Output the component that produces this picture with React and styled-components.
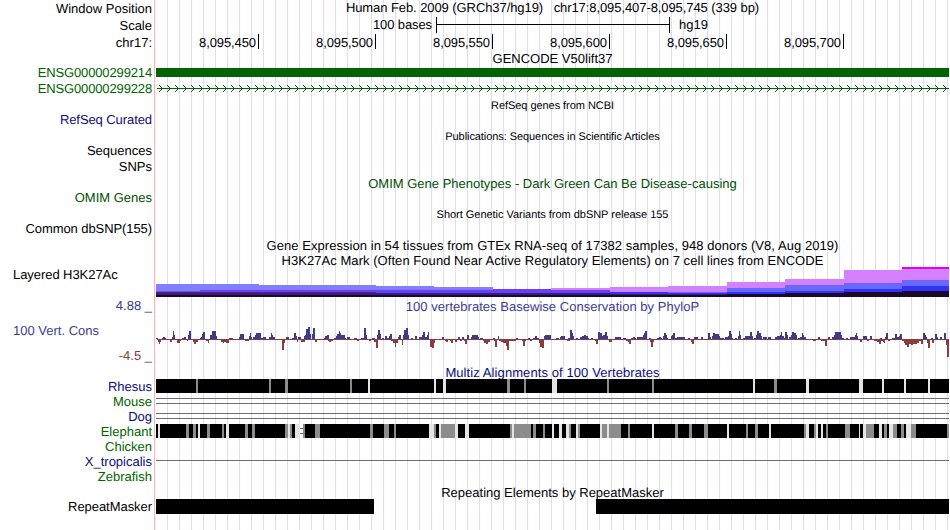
import React from 'react';
import styled, { createGlobalStyle } from 'styled-components';

const BLUE = '#0c0c78';
const GREEN = '#006400';
const OMIM = '#005000';
const CONS_UP = '#3c3c8c';
const CONS_DOWN = '#8c3c3c';

const GlobalStyle = createGlobalStyle`
  body {
    margin: 0;
    background: white;
  }
`;

const Browser = styled.div`
  display: flex;
  flex-direction: column;
  width: 950px;
  height: 530px;
  overflow: hidden;
  font-family: "Liberation Sans", Arial, sans-serif;
  font-size: 13px;
  line-height: 15px;
  text-rendering: geometricPrecision;
  color: black;
  background:
    linear-gradient(#ffb4b4, #ffb4b4) 154px 0 / 1px 100% no-repeat,
    repeating-linear-gradient(90deg, #dcdcff 0 1px, transparent 1px 12px) 167px 0 / 782px 100% no-repeat;
`;

const Row = styled.div`
  display: grid;
  grid-template-columns: 156px 793px;
  height: ${props => props.$h}px;
`;

const Label = styled.div`
  padding: ${props => props.$top || 0}px 4px 0 13px;
  text-align: ${props => props.$left ? 'left' : 'right'};
  letter-spacing: ${props => props.$ls || 0}px;
  white-space: pre;
  color: ${props => props.$color || 'black'};
`;

const Title = styled.div`
  padding-top: ${props => props.$top || 0}px;
  text-align: center;
  letter-spacing: ${props => props.$ls || 0}px;
  white-space: pre;
  color: ${props => props.$color || 'black'};
`;

const SmallTitle = styled(Title)`
  padding-top: 3px;
  font-size: 11px;
  line-height: 12px;
`;

const Scale = styled.div`
  display: flex;
`;

const ScaleText = styled.span`
  width: 276px;
  margin-right: 4px;
  text-align: right;
  letter-spacing: -0.1px;
`;

const ScaleBar = styled.span`
  box-sizing: border-box;
  width: 234px;
  height: 16px;
  margin-right: 9px;
  border: solid black;
  border-width: 0 1px;
  background: linear-gradient(black, black) 0 7px / 100% 1px no-repeat;
`;

const Ruler = styled.div`
  display: flex;
  padding-top: 1px;
`;

const Mark = styled.span`
  box-sizing: border-box;
  width: ${props => props.$first ? 103 : 117}px;
  height: 15px;
  padding: 1px 2px 0 0;
  border-right: 1px solid black;
  text-align: right;
  letter-spacing: -0.1px;
`;

const GeneBar = styled.div`
  height: 9px;
  margin-top: 3px;
  background: ${GREEN};
`;

const Repeats = styled.div`
  display: flex;
  justify-content: space-between;
`;

const Repeat = styled.span`
  width: ${props => props.$w}px;
  background: black;
`;

const Drawing = styled.svg`
  display: block;
  overflow: visible;
  shape-rendering: crispEdges;
`;

// H3K27Ac steps: [x, width, [top, color], ...], every layer runs down to y = 30
const PINK = '#d480ff';
const SKY = '#6868ff';
const COBALT = '#3232ff';
const VIOLET = '#6c3cff';
const LILAC = '#8080ff';
const MAROON = '#5a2070';
const NAVY = '#302080';
const DARK = '#1c0828';
const SIGNAL = [
  [0, 44, [17, LILAC], [24, '#6c50f0'], [25, MAROON], [26, NAVY], [28, DARK]],
  [44, 59, [17, LILAC], [23, VIOLET], [25, MAROON], [26, NAVY], [28, DARK]],
  [103, 117, [18, LILAC], [23, VIOLET], [25, '#60208c'], [26, NAVY], [28, DARK]],
  [220, 58, [19, LILAC], [23, VIOLET], [26, NAVY], [28, DARK]],
  [278, 59, [20, LILAC], [23, VIOLET], [26, NAVY], [28, DARK]],
  [337, 58, [22, VIOLET], [26, NAVY], [28, DARK]],
  [395, 59, [21, PINK], [23, VIOLET], [26, NAVY], [28, DARK]],
  [454, 58, [20, PINK], [25, COBALT], [27, NAVY], [28, DARK]],
  [512, 59, [19, PINK], [25, SKY], [26, COBALT], [27, NAVY], [28, DARK]],
  [571, 58, [15, PINK], [21, SKY], [25, COBALT], [27, DARK]],
  [629, 59, [12, PINK], [18, SKY], [24, COBALT], [26, DARK]],
  [688, 58, [3, PINK], [16, SKY], [22, COBALT], [25, DARK]],
  [746, 47, [0, '#dc00ff'], [2, PINK], [13, SKY], [19, COBALT], [24, DARK]],
];

// PhyloP scores by block: x origin of the block and flat triples of
// start, end (thirds of a pixel) and height in pixels, negative below the axis
const PHYLOP = [
  [-6, [
    18, 24, 1, 36, 48, 1, 40, 46, 2, 66, 75, 2, 69, 72, 8, 72, 75, 4, 97, 108, 1, 102, 108, 2,
    114, 117, 4, 117, 123, 8, 150, 153, 1, 153, 156, 2, 156, 159, 5, 159, 165, 7,
    180, 186, 4, 186, 198, 8, 198, 201, 3, 237, 249, 1, 267, 270, 2, 270, 282, 5,
    297, 300, 3, 300, 303, 6, 303, 306, 2, 309, 315, 2, 315, 318, 4, 318, 333, 6, 333, 339, 1,
    339, 348, 2, 357, 363, 2, 363, 366, 6, 366, 369, 4, 369, 375, 2, 408, 417, 2, 426, 432, 1,
    432, 438, 6, 438, 441, 3, 444, 453, 2, 462, 465, 3, 465, 469, 4, 468, 474, 10, 474, 480, 12,
    480, 484, 5, 486, 489, 5, 489, 495, 11, 522, 525, 1, 525, 531, 3, 531, 537, 4,
    552, 558, 1, 558, 561, 3, 561, 567, 5, 567, 570, 8, 570, 573, 6, 573, 579, 4, 579, 585, 4,
    585, 588, 1, 591, 600, 2, 612, 621, 1, 633, 642, 1, 642, 648, 11, 648, 651, 4, 666, 675, 1,
    681, 684, 4, 684, 690, 9, 690, 693, 5, 696, 702, 1, 705, 711, 3, 711, 717, 1, 717, 720, 3,
    720, 726, 5, 744, 747, 2, 747, 753, 4, 759, 762, 4, 762, 768, 9, 768, 774, 11, 774, 777, 4,
    783, 789, 1,
    24, 27, -3, 27, 30, -5, 30, 33, -3, 60, 66, -3, 81, 90, -4, 90, 93, -2, 111, 114, -2,
    129, 132, -3, 132, 138, -5, 138, 144, -3, 168, 174, -2, 174, 177, -4, 213, 219, -3,
    219, 222, -4, 222, 228, -3, 228, 237, -4, 285, 297, -2, 396, 402, -11, 402, 405, -4,
    441, 444, -3, 453, 465, -3, 495, 501, -3, 534, 549, -2, 537, 543, -3, 621, 627, -2,
    657, 663, -2, 672, 678, -3, 678, 684, -9, 723, 729, -2, 729, 734, -4, 734, 738, -8,
    738, 744, -4, 756, 759, -6,
  ]],
  [259, [
    0, 6, 3, 12, 21, 2, 21, 24, 4, 24, 30, 7, 30, 36, 2, 36, 39, 4, 39, 42, 7, 81, 87, 2,
    129, 135, 2, 141, 147, 2, 156, 162, 4, 168, 171, 2, 171, 189, 4, 189, 192, 2, 195, 204, 1,
    234, 240, 1, 249, 252, 3, 303, 309, 1, 339, 345, 1, 354, 360, 1, 360, 366, 3, 366, 372, 1,
    387, 390, 3, 390, 408, 4, 423, 432, 1, 435, 438, 2, 438, 450, 3, 459, 465, 1, 465, 471, 9,
    471, 474, 6, 474, 477, 3, 483, 489, 1, 495, 501, 2, 501, 507, 3, 507, 513, 4, 513, 519, 3,
    519, 522, 1, 528, 534, 1, 549, 555, 7, 555, 561, 6, 561, 564, 3, 564, 570, 4, 570, 576, 7,
    576, 579, 3, 600, 618, 2, 624, 633, 1, 648, 663, 1, 654, 660, 2, 666, 684, 2, 684, 687, 4,
    687, 690, 6, 690, 696, 8, 702, 708, 1, 726, 741, 1, 732, 738, 2, 744, 747, 3, 747, 752, 6,
    752, 756, 4, 756, 759, 1, 768, 771, 3, 771, 774, 4, 774, 780, 6, 780, 786, 1, 786, 810, 2,
    9, 15, -1, 45, 51, -8, 51, 57, -9, 57, 60, -4, 90, 93, -2, 93, 99, -3, 105, 108, -2,
    108, 114, -4, 120, 126, -3, 135, 141, -2, 147, 150, -2, 150, 156, -5, 204, 207, -2,
    207, 213, -4, 213, 219, -5, 219, 225, -3, 237, 240, -2, 240, 246, -8, 252, 258, -2,
    258, 264, -3, 264, 273, -4, 273, 276, -7, 276, 282, -11, 282, 303, -2, 321, 324, -2,
    324, 330, -7, 330, 333, -2, 345, 351, -2, 372, 375, -4, 375, 381, -8, 381, 387, -9,
    456, 465, -2, 540, 543, -2, 543, 549, -5, 582, 591, -3, 633, 639, -2, 639, 642, -3,
    642, 648, -5, 705, 708, -3, 708, 714, -8, 714, 717, -3,
  ]],
  [524, [
    24, 30, 1, 42, 54, 2, 63, 69, 2, 84, 90, 6, 90, 93, 2, 96, 99, 3, 99, 105, 6, 105, 117, 5,
    117, 120, 3, 120, 132, 1, 135, 144, 2, 144, 147, 3, 147, 153, 8, 153, 156, 5, 156, 159, 1,
    165, 171, 1, 174, 177, 3, 177, 180, 8, 180, 183, 4, 189, 195, 1, 195, 210, 3, 210, 216, 7,
    216, 219, 3, 222, 228, 1, 228, 231, 4, 231, 237, 8, 237, 243, 6, 243, 246, 3, 249, 261, 2,
    264, 273, 2, 285, 291, 2, 291, 300, 3, 300, 303, 4, 303, 306, 7, 306, 312, 3, 312, 315, 1,
    315, 321, 7, 321, 324, 4, 327, 333, 2, 333, 336, 4, 336, 342, 7, 342, 348, 6, 348, 351, 4,
    354, 360, 1, 360, 366, 2, 366, 369, 6, 369, 372, 4, 372, 378, 2, 414, 420, 2, 444, 450, 2,
    456, 462, 2, 462, 465, 4, 465, 483, 7, 483, 486, 4, 486, 492, 1, 498, 504, 1, 510, 525, 2,
    525, 528, 4, 528, 531, 6, 531, 534, 3, 549, 561, 3, 570, 576, 3, 600, 606, 1, 615, 618, 2,
    618, 624, 6, 636, 645, 1, 645, 651, 5, 651, 657, 2, 657, 660, 3, 660, 666, 5, 729, 735, 6,
    735, 738, 4, 738, 741, 2, 753, 759, 1, 764, 771, 5, 771, 774, 2, 780, 786, 2, 792, 798, 6,
    33, 36, -3, 36, 42, -5, 399, 408, -2, 423, 435, -2, 435, 441, -7, 540, 546, -3,
    561, 567, -2, 582, 591, -2, 591, 597, -3, 597, 603, -5, 603, 609, -2, 609, 612, -3,
    612, 615, -4, 624, 630, -2, 666, 672, -2, 672, 675, -4, 675, 681, -6, 681, 687, -8,
    687, 693, -5, 693, 699, -6, 699, 711, -5, 711, 717, -4, 717, 723, -2, 723, 729, -5,
    741, 744, -4, 744, 750, -9, 756, 762, -4, 798, 801, -6, 801, 807, -18,
  ]],
];

// Gaps in alignments: flat triples of start, end (window x) and shade, 0 grey and 1 light
const RHESUS = [
  196, 198, 0, 269, 271, 0, 285, 288, 0, 350, 352, 0, 368, 370, 1, 434, 436, 1, 443, 446, 1,
  507, 510, 0, 524, 526, 0, 552, 557, 1, 607, 609, 0, 652, 654, 0, 753, 755, 1, 774, 777, 0,
  806, 809, 1, 859, 863, 1, 882, 884, 1, 904, 906, 1, 928, 930, 1,
];
const ELEPHANT = [
  158, 160, 1, 186, 189, 0, 193, 196, 0, 198, 200, 1, 207, 210, 0, 222, 224, 0, 226, 229, 1,
  245, 248, 0, 252, 255, 0, 285, 288, 0, 288, 290, 1, 290, 292, 0, 295, 300, 1, 303, 305, 0,
  315, 320, 0, 370, 373, 0, 384, 389, 0, 394, 396, 0, 429, 434, 1, 434, 436, 0, 439, 441, 1,
  441, 455, 0, 455, 458, 1, 465, 469, 1, 510, 512, 0, 512, 514, 1, 514, 531, 0, 533, 536, 0,
  543, 545, 0, 552, 554, 1, 559, 562, 1, 566, 569, 1, 569, 571, 0, 576, 578, 1, 578, 580, 0,
  600, 602, 1, 602, 607, 0, 607, 609, 1, 609, 621, 0, 628, 630, 0, 652, 654, 1, 675, 678, 0,
  689, 692, 0, 704, 708, 0, 727, 729, 1, 746, 748, 0, 755, 758, 0, 769, 771, 1, 804, 806, 0,
  806, 809, 1, 814, 816, 0, 816, 818, 1, 821, 823, 1, 826, 828, 0, 845, 850, 0, 859, 860, 1,
  863, 866, 1, 866, 874, 0, 879, 882, 1, 884, 887, 0, 889, 893, 1, 893, 897, 0, 901, 904, 0,
  906, 911, 1, 911, 916, 0, 947, 949, 0,
];

const triples = (list) => {
  const out = [];
  for (let i = 0; i < list.length; i += 3) out.push(list.slice(i, i + 3));
  return out;
};

function GeneArrows() {
  const arrows = Array.from({ length: 99 }, (_, i) => 3 + i * 8);
  return (
    <Drawing width="793" height="16">
      <rect x="1" y="7" width="792" height="1" fill={GREEN} />
      <path
        d={arrows.map(x => `M${x} 4h1v1h1v1h1v1h1v1h-1v1h-1v1h-1v1h-1v-1h1v-1h1v-1h1v-1h-1v-1h-1v-1h-1z`).join('')}
        fill={GREEN}
      />
    </Drawing>
  );
}

function Signal() {
  return (
    <Drawing width="793" height="30">
      {SIGNAL.map(([x, w, ...layers]) => layers.map(([top, color]) => (
        <rect key={`${x}-${top}`} x={x} y={top} width={w} height={30 - top} fill={color} />
      )))}
    </Drawing>
  );
}

function Conservation() {
  return (
    <Drawing width="793" height="33">
      <rect x="1" y="24" width="792" height="1" fill={CONS_DOWN} />
      {PHYLOP.map(([origin, scores]) => triples(scores).map(([from, to, h]) => {
        const x = Math.round(from / 3);
        return (
          <rect
            key={`${origin}-${from}-${to}`}
            x={origin + x}
            y={h > 0 ? 24 - h : 24}
            width={Math.max(1, Math.round(to / 3) - x)}
            height={Math.abs(h)}
            fill={h > 0 ? CONS_UP : CONS_DOWN}
          />
        );
      }))}
    </Drawing>
  );
}

function Alignment({ gaps, children }) {
  return (
    <Drawing width="793" height="14">
      <rect width="793" height="14" fill="black" />
      {triples(gaps).map(([from, to, light]) => (
        <rect key={from} x={from - 156} width={to - from} height="14" fill={light ? '#e4e4e4' : '#8c8c8c'} />
      ))}
      {children}
    </Drawing>
  );
}

function Lines({ at }) {
  return (
    <Drawing width="793" height="15">
      {at.map(y => <rect key={y} y={y} width="793" height="1" fill="#6e6e6e" />)}
    </Drawing>
  );
}

function App() {
  return (
    <>
      <GlobalStyle />
      <Browser>
        <Row $h={17}>
          <Label $top={1}>Window Position</Label>
          <Title $ls={-0.08}>Human Feb. 2009 (GRCh37/hg19)   chr17:8,095,407-8,095,745 (339 bp)</Title>
        </Row>
        <Row $h={16}>
          <Label $top={1}>Scale</Label>
          <Scale>
            <ScaleText>100 bases</ScaleText>
            <ScaleBar />
            <span>hg19</span>
          </Scale>
        </Row>
        <Row $h={17}>
          <Label $top={2}>chr17:</Label>
          <Ruler>
            {['450', '500', '550', '600', '650', '700'].map((pos, i) => (
              <Mark key={pos} $first={i === 0}>8,095,{pos}</Mark>
            ))}
          </Ruler>
        </Row>
        <Row $h={15}>
          <Label />
          <Title $top={1}>GENCODE V50lift37</Title>
        </Row>
        <Row $h={16}>
          <Label $color={GREEN} $ls={-0.14}>ENSG00000299214</Label>
          <GeneBar />
        </Row>
        <Row $h={16}>
          <Label $color={GREEN} $ls={-0.14}>ENSG00000299228</Label>
          <GeneArrows />
        </Row>

        <Row $h={15}>
          <Label />
          <SmallTitle $ls={-0.05}>RefSeq genes from NCBI</SmallTitle>
        </Row>
        <Row $h={16}>
          <Label $color={BLUE} $ls={-0.08}>RefSeq Curated</Label>
        </Row>
        <Row $h={15}>
          <Label />
          <SmallTitle $ls={-0.07}>Publications: Sequences in Scientific Articles</SmallTitle>
        </Row>
        <Row $h={16}>
          <Label>Sequences</Label>
        </Row>
        <Row $h={16}>
          <Label>SNPs</Label>
        </Row>
        <Row $h={15}>
          <Label />
          <Title $top={1} $color={OMIM}>OMIM Gene Phenotypes - Dark Green Can Be Disease-causing</Title>
        </Row>
        <Row $h={16}>
          <Label $color={OMIM}>OMIM Genes</Label>
        </Row>
        <Row $h={15}>
          <Label />
          <SmallTitle $ls={-0.03}>Short Genetic Variants from dbSNP release 155</SmallTitle>
        </Row>
        <Row $h={16}>
          <Label $ls={-0.08}>Common dbSNP(155)</Label>
        </Row>

        <Row $h={15}>
          <Label />
          <Title $top={1} $ls={0.05}>
            Gene Expression in 54 tissues from GTEx RNA-seq of 17382 samples, 948 donors (V8, Aug 2019)
          </Title>
        </Row>
        <Row $h={15}>
          <Label />
          <Title $top={1} $ls={0.05}>
            H3K27Ac Mark (Often Found Near Active Regulatory Elements) on 7 cell lines from ENCODE
          </Title>
        </Row>
        <Row $h={31}>
          <Label $left $ls={-0.06}>Layered H3K27Ac</Label>
          <Signal />
        </Row>

        <Row $h={17}>
          <Label $color={CONS_UP}>4.88 _</Label>
          <Title $top={1} $ls={0.03} $color={CONS_UP}>100 vertebrates Basewise Conservation by PhyloP</Title>
        </Row>
        <Row $h={33}>
          <Label $left $top={8} $color={CONS_UP}>100 Vert. Cons</Label>
          <Conservation />
        </Row>
        <Row $h={16}>
          <Label $color={CONS_DOWN}>-4.5 _</Label>
        </Row>

        <Row $h={15}>
          <Label />
          <Title $top={1} $ls={0.09} $color={BLUE}>Multiz Alignments of 100 Vertebrates</Title>
        </Row>
        <Row $h={15}>
          <Label $color={BLUE}>Rhesus</Label>
          <Alignment gaps={RHESUS} />
        </Row>
        <Row $h={15}>
          <Label $color={GREEN}>Mouse</Label>
          <Lines at={[4, 9]} />
        </Row>
        <Row $h={15}>
          <Label $color={BLUE}>Dog</Label>
          <Lines at={[4, 9]} />
        </Row>
        <Row $h={15}>
          <Label $color={GREEN}>Elephant</Label>
          <Alignment gaps={ELEPHANT}>
            <rect x="144" width="3" height="14" fill="white" />
            <path d="M144 4h3v1h-3zM144 9h3v1h-3z" fill="#6e6e6e" />
          </Alignment>
        </Row>
        <Row $h={15}>
          <Label $color={GREEN}>Chicken</Label>
        </Row>
        <Row $h={15}>
          <Label $color={BLUE}>X_tropicalis</Label>
          <Lines at={[6]} />
        </Row>
        <Row $h={15}>
          <Label $color={GREEN}>Zebrafish</Label>
        </Row>

        <Row $h={15}>
          <Label />
          <Title $top={1}>Repeating Elements by RepeatMasker</Title>
        </Row>
        <Row $h={15}>
          <Label $ls={-0.05}>RepeatMasker</Label>
          <Repeats>
            <Repeat $w={218} />
            <Repeat $w={353} />
          </Repeats>
        </Row>
      </Browser>
    </>
  );
}

export default App;
